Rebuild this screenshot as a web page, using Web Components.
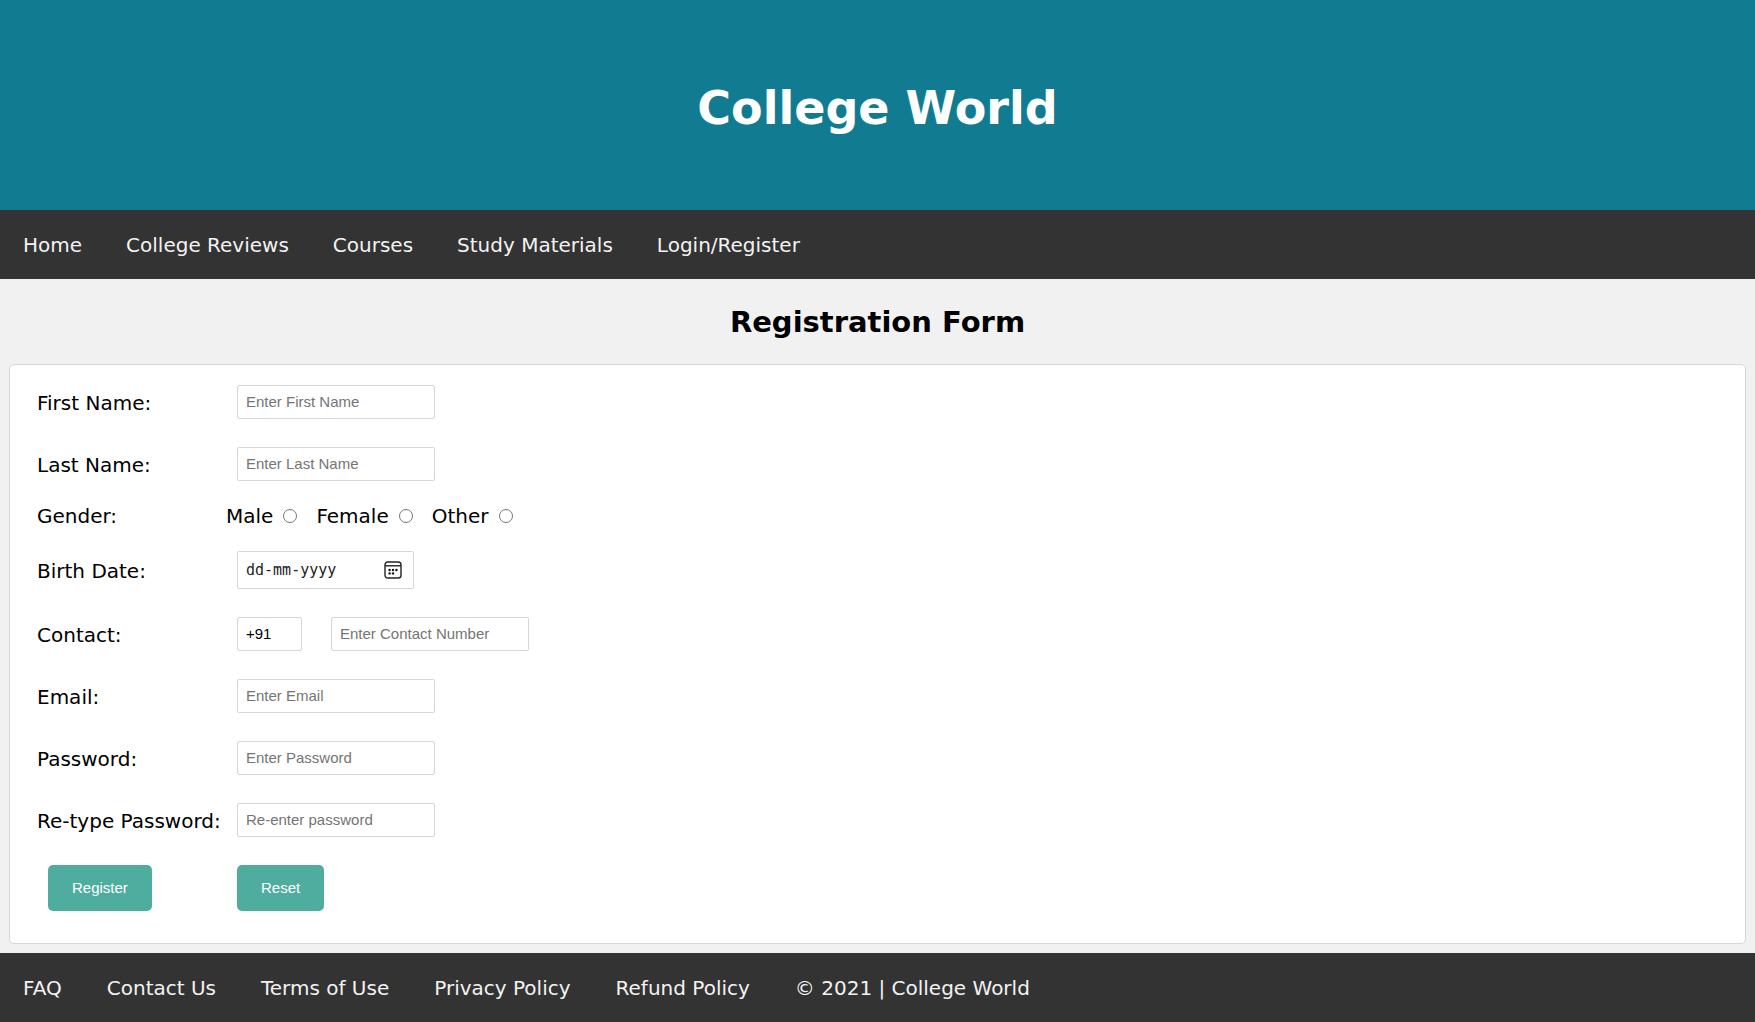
<!DOCTYPE html>
<html lang="en">
<head>
<meta charset="utf-8">
<title>College World</title>
<style>
  body {
    margin: 0;
    background: #f1f1f1;
    color: #000;
    font: 20px/24px Verdana, "DejaVu Sans", sans-serif;
  }
</style>
</head>
<body>
<college-page>
  <site-header slot="header">College World</site-header>
  <link-bar slot="nav" label="Main">
    <a href="#home">Home</a>
    <a href="#reviews">College Reviews</a>
    <a href="#courses">Courses</a>
    <a href="#materials">Study Materials</a>
    <a href="#login">Login/Register</a>
  </link-bar>
  <registration-form></registration-form>
  <link-bar slot="footer" label="Footer">
    <a href="#faq">FAQ</a>
    <a href="#contact">Contact Us</a>
    <a href="#terms">Terms of Use</a>
    <a href="#privacy">Privacy Policy</a>
    <a href="#refund">Refund Policy</a>
    <a href="#about">© 2021 | College World</a>
  </link-bar>
</college-page>

<script>
  function define(name, html) {
    const template = document.createElement('template');
    template.innerHTML = html;
    customElements.define(name, class extends HTMLElement {
      constructor() {
        super();
        this.attachShadow({ mode: 'open' }).append(template.content.cloneNode(true));
      }
      connectedCallback() {
        const nav = this.shadowRoot.querySelector('nav');
        if (nav) nav.setAttribute('aria-label', this.getAttribute('label') || '');
      }
    });
  }

  define('college-page', `
    <style>
      :host { display: flex; flex-direction: column; min-height: 100vh; }
      main { flex: 1; }
      slot[name=nav] { --link-gap: 44px; }
      slot[name=footer] { --link-gap: 45px; }
    </style>
    <slot name="header"></slot>
    <slot name="nav"></slot>
    <main><slot></slot></main>
    <slot name="footer"></slot>
  `);

  define('site-header', `
    <style>
      :host { display: block; padding: 80px 20px 74px; background: #117c91; color: #fff; text-align: center; }
      h1 { margin: 0; font-size: 46px; line-height: 56px; font-weight: bold; }
    </style>
    <header><h1><slot></slot></h1></header>
  `);

  define('link-bar', `
    <style>
      :host { display: block; background: #333; }
      nav { display: flex; flex-wrap: wrap; column-gap: var(--link-gap, 44px); padding: 0 23px; }
      ::slotted(a) { padding: 24px 0 22px; line-height: 23px; color: #f2f2f2; text-decoration: none; }
      ::slotted(a:hover) { text-decoration: underline; }
    </style>
    <nav><slot></slot></nav>
  `);

  define('form-row', `
    <style>
      :host { display: flex; align-items: center; padding: 14px 0; }
      .name { flex: 0 0 189px; white-space: nowrap; }
      .name ::slotted(label), .name ::slotted(span) { display: block; padding-top: 2px; }
      .controls { display: flex; align-items: center; }
    </style>
    <div class="name"><slot name="name"></slot></div>
    <div class="controls"><slot></slot></div>
  `);

  define('registration-form', `
    <style>
      :host { display: block; padding: 0 9px 9px; }
      h2 { margin: 0; padding: 25px 0 24px; font-size: 29px; line-height: 36px; text-align: center; }
      form { padding: 6px 27px 18px; border: 1px solid #d6d6d6; border-radius: 5px; background: #fff; }
      input, button { box-sizing: border-box; font: 15px/18px "Liberation Sans", Arial, sans-serif; }
      input:not([type=radio]) {
        width: 198px; height: 34px; margin: 0 0 0 11px; padding: 0 8px 1px;
        border: 1px solid #d6d6d6; border-radius: 2px; background: #fff; color: #000;
      }
      input::placeholder { color: #757575; opacity: 1; }
      input#code { width: 65px; margin-right: 18px; }
      .gender { padding: 7px 0 9px; }
      .choice { display: flex; align-items: center; gap: 10px; margin-right: 19px; padding-top: 2px; }
      input[type=radio] { width: 14px; height: 14px; margin: 0; }
      .date {
        display: flex; align-items: center; box-sizing: border-box; width: 177px; height: 38px; margin-left: 11px;
        padding-right: 11px; border: 1px solid #d6d6d6; border-radius: 2px;
      }
      .date input#birth {
        flex: 1; min-width: 0; height: 36px; margin: 0; border: 0; padding: 0 0 0 8px;
        font: 15px/18px Consolas, "DejaVu Sans Mono", monospace;
      }
      .date input#birth::placeholder { color: #222; }
      .date button { display: block; padding: 0; border: 0; background: none; line-height: 0; }
      .action {
        height: 46px; margin: 0 0 0 11px; padding: 0 24px; border: 0; border-radius: 5px;
        background: #4fada0; color: #fff; cursor: pointer;
      }
    </style>
    <h2>Registration Form</h2>
    <form>
      <form-row>
        <label slot="name" for="first">First Name:</label>
        <input id="first" type="text" placeholder="Enter First Name">
      </form-row>
      <form-row>
        <label slot="name" for="last">Last Name:</label>
        <input id="last" type="text" placeholder="Enter Last Name">
      </form-row>
      <form-row class="gender" role="radiogroup" aria-label="Gender">
        <span slot="name">Gender:</span>
        <label class="choice">Male <input type="radio" name="gender" value="male"></label>
        <label class="choice">Female <input type="radio" name="gender" value="female"></label>
        <label class="choice">Other <input type="radio" name="gender" value="other"></label>
      </form-row>
      <form-row>
        <label slot="name" for="birth">Birth Date:</label>
        <div class="date">
          <input id="birth" type="text" placeholder="dd-mm-yyyy">
          <button type="button" aria-label="Open calendar">
            <svg width="18" height="18" viewBox="0 0 18 18" fill="none" stroke="#222" stroke-width="1.4">
              <rect x="1" y="1" width="16" height="16" rx="2.8"/>
              <path d="M1 4.8h16"/>
              <g fill="#111" stroke="none">
                <circle cx="5.6" cy="9" r="1.2"/><circle cx="9" cy="9" r="1.2"/><circle cx="12.4" cy="9" r="1.2"/>
                <circle cx="5.6" cy="12.4" r="1.2"/><circle cx="9" cy="12.4" r="1.2"/>
              </g>
            </svg>
          </button>
        </div>
      </form-row>
      <form-row>
        <label slot="name" for="phone">Contact:</label>
        <input id="code" type="text" value="+91" aria-label="Country code">
        <input id="phone" type="tel" placeholder="Enter Contact Number">
      </form-row>
      <form-row>
        <label slot="name" for="email">Email:</label>
        <input id="email" type="email" placeholder="Enter Email">
      </form-row>
      <form-row>
        <label slot="name" for="password">Password:</label>
        <input id="password" type="password" placeholder="Enter Password">
      </form-row>
      <form-row>
        <label slot="name" for="again">Re-type Password:</label>
        <input id="again" type="password" placeholder="Re-enter password">
      </form-row>
      <form-row>
        <button class="action" slot="name" type="submit">Register</button>
        <button class="action" type="reset">Reset</button>
      </form-row>
    </form>
  `);
</script>
</body>
</html>
